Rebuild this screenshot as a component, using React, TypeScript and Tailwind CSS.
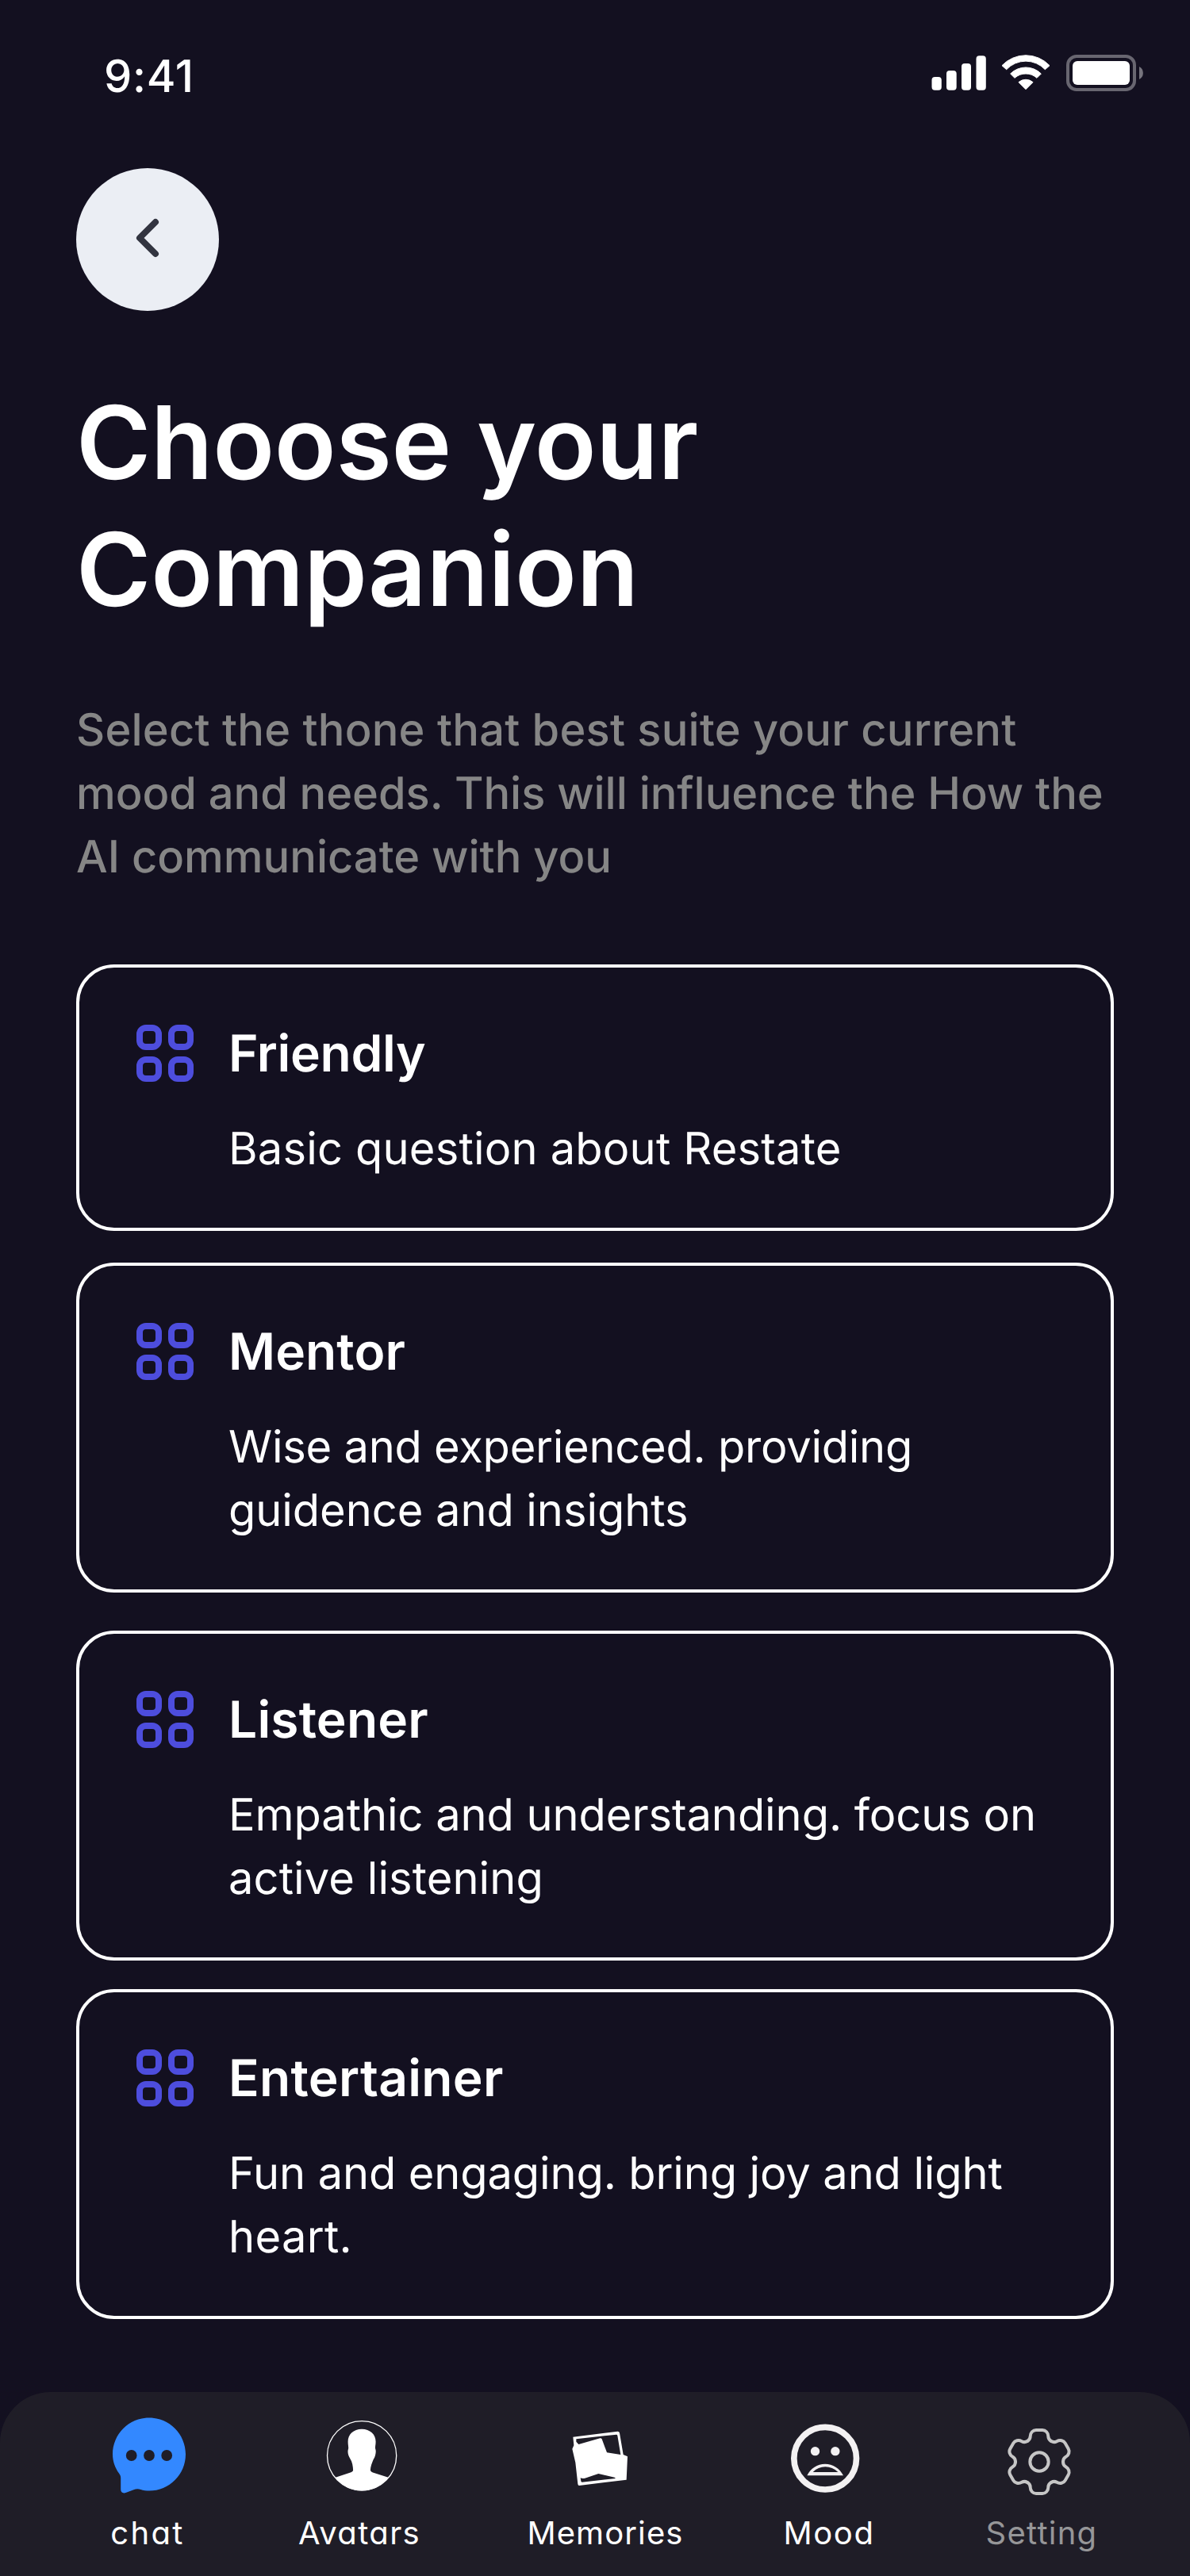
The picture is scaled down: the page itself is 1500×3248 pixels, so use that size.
import type { ReactNode } from "react";

type Companion = {
  title: string;
  titleClass: string;
  lines: { text: string; className: string }[];
  spacing: string;
};

const companions: Companion[] = [
  {
    title: "Friendly",
    titleClass: "tracking-[-0.3px]",
    lines: [{ text: "Basic question about Restate", className: "tracking-[0.19px]" }],
    spacing: "mt-0",
  },
  {
    title: "Mentor",
    titleClass: "tracking-[0.1px]",
    lines: [
      { text: "Wise and experienced. providing", className: "tracking-[-0.24px]" },
      { text: "guidence and insights", className: "tracking-[-0.05px]" },
    ],
    spacing: "mt-10",
  },
  {
    title: "Listener",
    titleClass: "tracking-[0.2px]",
    lines: [
      { text: "Empathic and understanding. focus on", className: "tracking-[-0.06px]" },
      { text: "active listening", className: "tracking-[0.1px]" },
    ],
    spacing: "mt-12",
  },
  {
    title: "Entertainer",
    titleClass: "tracking-[0.33px]",
    lines: [
      { text: "Fun and engaging. bring joy and light", className: "tracking-[-0.12px]" },
      { text: "heart.", className: "tracking-[0.3px]" },
    ],
    spacing: "mt-9",
  },
];

function SignalIcon() {
  return (
    <svg width="69" height="46" viewBox="0 0 69 46" fill="white">
      <rect x="0.5" y="28" width="12.3" height="16.7" rx="4" />
      <rect x="19" y="20" width="12.7" height="24.7" rx="4" />
      <rect x="38" y="11" width="12" height="33.7" rx="4" />
      <rect x="56.5" y="1.3" width="12.3" height="43.4" rx="4" />
    </svg>
  );
}

function WifiIcon() {
  return (
    <svg width="62" height="46" viewBox="427 87 186 138" fill="white" stroke="white" strokeWidth="3" strokeLinejoin="round">
      <path d="M430 128 A124 124 0 0 1 610 128 L593 143 A100 100 0 0 0 447 143Z" />
      <path d="M462 159 A82 82 0 0 1 578 159 L562 175 A63 63 0 0 0 478 175Z" />
      <path d="M493 191 A41 41 0 0 1 547 191 L520 218Z" />
    </svg>
  );
}

function BatteryIcon() {
  return (
    <svg width="98" height="46" viewBox="0 0 98 46">
      <rect x="2" y="2" width="84" height="42" rx="11" fill="none" stroke="white" strokeOpacity="0.36" strokeWidth="4" />
      <rect x="8" y="8" width="72" height="30" rx="6" fill="white" />
      <path d="M92 15 A9 9 0 0 1 92 31Z" fill="white" fillOpacity="0.42" />
    </svg>
  );
}

function GridIcon() {
  return (
    <svg width="72" height="72" viewBox="0 0 72 72" fill="none" stroke="#4d4ddd" strokeWidth="8" className="mt-[3px] shrink-0">
      <rect x="4" y="4" width="24" height="24" rx="8" />
      <rect x="44" y="4" width="24" height="24" rx="8" />
      <rect x="4" y="44" width="24" height="24" rx="8" />
      <rect x="44" y="44" width="24" height="24" rx="8" />
    </svg>
  );
}

function ChatIcon() {
  return (
    <svg width="120" height="110" viewBox="126 3040 120 110">
      <path
        d="M188 3048.4 C213.5 3048.4 234 3069 234 3094.5 C234 3120 213.5 3140.6 188 3140.6 C184.5 3140.6 180.5 3140 177.5 3139 C174 3137.9 171.5 3138.2 168.5 3139.3 L158.5 3143 C155 3144.3 152.2 3142.4 152.2 3139 L152.2 3124.5 C152.2 3122 151.4 3120.6 150 3118.6 C145 3111.5 142 3103.5 142 3094.5 C142 3069 162.5 3048.4 188 3048.4Z"
        fill="#3388ff"
      />
      <g fill="#1f1d27">
        <circle cx="165.7" cy="3096" r="6.9" />
        <circle cx="188" cy="3096" r="6.9" />
        <circle cx="210.2" cy="3096" r="6.9" />
      </g>
    </svg>
  );
}

function AvatarIcon() {
  return (
    <svg width="160" height="110" viewBox="373 3040 160 110">
      <circle cx="456.1" cy="3096.2" r="43.6" fill="none" stroke="white" strokeWidth="1.3" />
      <path
        d="M456 3062.7 C466.5 3062.7 473.6 3069.5 473.6 3078.5 C473.6 3082.5 472.8 3084.5 473 3087 C473.3 3088.5 473.9 3089.5 473.7 3091.5 C473.5 3094.5 472.8 3098 470.7 3101 C468.8 3105.5 467 3110 466.9 3114.5 C467 3116.5 469.5 3117.3 471.5 3118 L489.5 3123.7 C482 3134 470 3140.4 456 3140.4 C442 3140.4 430.5 3134 422.8 3123.7 L441 3117.7 C443 3117 445 3116.5 445.1 3114.5 C445 3110 444 3104 441.3 3100 C439.5 3097 438.6 3094.5 438.5 3091.5 C438.4 3089.5 439 3088.5 439.2 3087 C439.3 3084.5 438.6 3082.5 438.6 3078.5 C438.6 3069.5 445.5 3062.7 456 3062.7Z"
        fill="white"
      />
    </svg>
  );
}

function MemoriesIcon() {
  return (
    <svg width="200" height="110" viewBox="69 90 600 330">
      <path
        d="M247 188 L416 167 Q422 167 423 173 L437 255 L453 262 L449 350 L270 372 Q266 372 265 366 L256 285 L244 233 L250 220 Z"
        fill="white"
      />
      <path d="M259 196 L411 179 Q414 179 415 183 L427 255 L375 247 L356 196 Q354 192 349 193 L268 216 L259 206Z" fill="#1f1d27" />
      <path d="M275 343 Q283 347 292 344 L343 327 L404 341 L408 345 L281 359 Q277 359 277 355Z" fill="#1f1d27" />
    </svg>
  );
}

function MoodIcon() {
  return (
    <svg width="120" height="110" viewBox="1035 90 360 330">
      <circle cx="1200.5" cy="269" r="118" fill="none" stroke="#f3f1f2" strokeWidth="23" />
      <circle cx="1162.5" cy="242" r="17" fill="#f3f1f2" />
      <circle cx="1238.5" cy="242" r="17" fill="#f3f1f2" />
      <path
        fillRule="evenodd"
        d="M1132 334 C1145 307 1171 290 1200 290 C1229 290 1256 307 1269 334Z M1154 321 L1249 321 C1235 308 1219 301 1201 301 C1183 301 1167 308 1154 321Z"
        fill="#f3f1f2"
      />
    </svg>
  );
}

const toothAngles = [0, 60, 120, 180, 240, 300];

function SettingIcon() {
  return (
    <svg width="160" height="110" viewBox="399 150 480 330">
      <g transform="translate(630 342)" fill="none" stroke="#c6c6c6" strokeWidth="12" strokeLinecap="round">
        <circle r="35" />
        {toothAngles.map((angle) => (
          <path
            key={angle}
            transform={`rotate(${angle})`}
            d="M-45 -78 C-38 -82 -34 -86 -34 -96 C-34 -110 -24 -120 -12 -120 L12 -120 C24 -120 34 -110 34 -96 C34 -86 38 -82 45 -78"
          />
        ))}
      </g>
    </svg>
  );
}

type NavItemProps = { className: string; label: string; labelClass: string; icon: ReactNode };

function NavItem({ className, label, labelClass, icon }: NavItemProps) {
  return (
    <button className={`flex shrink-0 flex-col items-center gap-3.5 ${className}`}>
      {icon}
      <span className={`text-[40px] leading-[60px] whitespace-nowrap [font-feature-settings:'cv11'] ${labelClass}`}>{label}</span>
    </button>
  );
}

export default function App() {
  return (
    <div className="flex h-[3248px] w-[1500px] flex-col bg-[#131020] font-['Inter',sans-serif] text-white [text-rendering:geometricPrecision]">
      <header className="flex h-[212px] items-start justify-between pt-14 pr-[58px] pl-[131px]">
        <span className="text-[56px] leading-[80px] font-medium tracking-[0.7px]">9:41</span>
        <div className="mt-[13px] flex">
          <SignalIcon />
          <div className="ml-[19px]">
            <WifiIcon />
          </div>
          <div className="ml-5">
            <BatteryIcon />
          </div>
        </div>
      </header>

      <main className="flex flex-1 flex-col px-24">
        <button className="flex size-[180px] items-center justify-center rounded-full bg-[#ebeef4]">
          <svg width="40" height="56" viewBox="0 0 40 56" fill="none" stroke="#323440" strokeWidth="8" strokeLinecap="round" strokeLinejoin="round" className="mb-1">
            <path d="M30 8 L10 28 L30 48" />
          </svg>
        </button>

        <h1 className="mt-[86px] text-[128px] leading-[160px] font-semibold whitespace-nowrap">
          <span className="tracking-[-0.26px]">Choose your</span>
          <br />
          <span className="tracking-[-0.15px]">Companion</span>
        </h1>

        <p className="mt-[82px] text-[56px] leading-[80px] font-medium whitespace-nowrap text-[#868686]">
          <span className="tracking-[0.22px]">Select the thone that best suite your current</span>
          <br />
          <span className="tracking-[-0.04px]">mood and needs. This will influence the How the</span>
          <br />
          <span>AI communicate with you</span>
        </p>

        <section className="mt-24 flex flex-col">
          {companions.map((item) => (
            <article key={item.title} className={`flex gap-11 rounded-[48px] border-4 border-white px-[72px] pt-[69px] pb-[60px] ${item.spacing}`}>
              <GridIcon />
              <div>
                <h2 className={`text-[64px] leading-[80px] font-semibold ${item.titleClass}`}>{item.title}</h2>
                <p className="mt-[39px] text-[56px] leading-[80px] whitespace-nowrap">
                  {item.lines.map((line) => (
                    <span key={line.text} className={`block ${line.className}`}>
                      {line.text}
                    </span>
                  ))}
                </p>
              </div>
            </article>
          ))}
        </section>
      </main>

      <nav className="flex h-[232px] shrink-0 rounded-t-[64px] bg-[#1f1d27] pt-6 pl-[126px]">
        <NavItem className="w-[120px]" label="chat" labelClass="tracking-[2.4px]" icon={<ChatIcon />} />
        <NavItem className="ml-[127px] w-[160px]" label="Avatars" labelClass="tracking-[1.4px]" icon={<AvatarIcon />} />
        <NavItem className="ml-[130px] w-[200px]" label="Memories" labelClass="tracking-[1.1px]" icon={<MemoriesIcon />} />
        <NavItem className="ml-[122px] w-[120px]" label="Mood" labelClass="tracking-[1.6px]" icon={<MoodIcon />} />
        <NavItem className="ml-[128px] w-[160px]" label="Setting" labelClass="tracking-[1.25px] text-[#969698]" icon={<SettingIcon />} />
      </nav>
    </div>
  );
}
